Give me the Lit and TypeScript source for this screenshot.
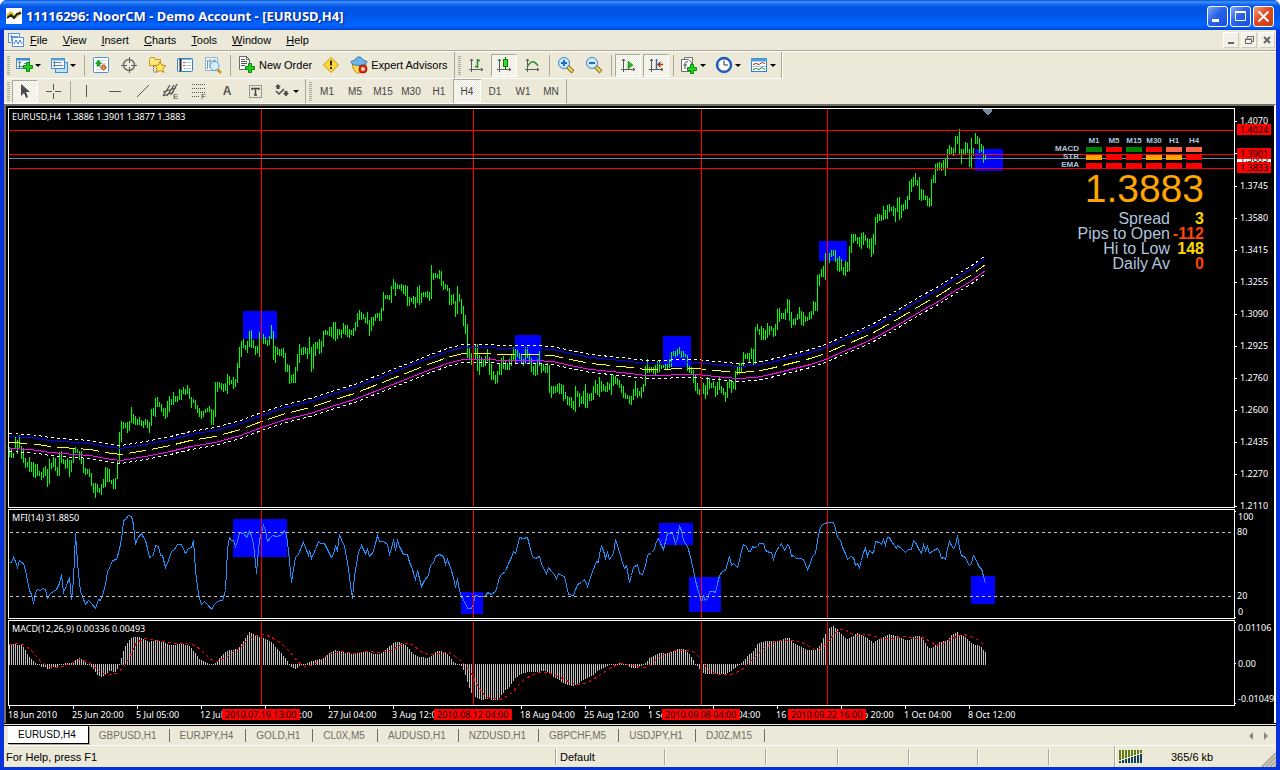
import { LitElement, html, svg, css } from "lit";
import { customElement, property, state } from "lit/decorators.js";
import { classMap } from "lit/directives/class-map.js";

/* ---------- market data (plot pixels, one bar every two pixels) ---------- */

const BAR_STEP = 2;
const FIRST_X = 9;

const PRICE = `447-457 448-458 453-458 436-448 440-454 435-448 446-459 448-463 458-468 462-467 457-472 462-472 462-477 464-478
464-476 471-476 472-480 468-478 466-476 469-487 459-484 463-469 457-467 458-471 467-476 452-476 451-463 459-464 460-469 458-468
460-477 460-472 448-463 447-453 449-453 451-460 451-464 459-473 468-475 469-474 469-477 473-486 483-493 483-498 484-492 488-493
484-495 479-488 467-487 468-482 469-482 480-484 479-489 478-489 460-479 432-464 421-442 422-429 423-428 422-433 421-431 407-423
414-424 416-425 419-425 417-425 420-426 421-428 419-425 420-428 422-433 409-426 408-416 398-417 397-407 402-407 404-412 408-416
408-419 401-417 396-412 399-405 392-405 396-402 396-402 389-400 390-400 387-394 389-395 385-394 388-399 397-408 399-403 400-409
405-413 408-417 411-419 411-417 409-413 408-412 406-412 409-425 410-425 382-417 382-392 382-388 383-390 384-392 383-391 374-394
376-385 380-384 377-389 379-387 363-383 347-368 341-357 339-348 345-350 341-353 331-347 330-348 340-348 346-355 346-353 332-357
334-342 334-344 337-344 340-346 336-345 325-339 331-360 346-363 347-355 349-356 349-356 348-358 353-372 364-372 365-384 375-383
374-383 367-383 354-371 344-363 348-355 347-355 347-354 348-359 337-354 347-372 344-369 342-356 342-349 339-354 341-353 331-347
330-335 331-335 327-336 327-337 322-339 322-341 329-339 329-335 330-338 323-334 325-335 325-337 329-338 330-335 328-336 322-331
313-327 310-320 312-320 314-319 317-323 312-324 320-336 317-331 317-326 314-321 313-318 313-321 308-321 292-311 295-299 295-299
295-300 286-303 279-289 282-296 284-289 285-289 284-291 285-294 285-296 286-306 297-306 298-302 296-304 297-308 287-303 285-305
293-303 292-297 292-297 291-298 292-301 265-299 273-280 273-278 274-278 270-279 271-286 281-290 284-289 285-291 288-305 295-305
294-304 301-317 286-314 294-302 299-314 306-326 315-334 324-358 348-359 353-365 345-360 344-360 344-371 355-375 357-367 360-367
356-366 349-361 357-375 364-380 371-380 375-384 371-383 363-375 358-375 356-369 361-370 363-370 359-370 354-366 347-360 349-364
350-357 353-359 355-364 359-366 347-364 347-358 353-364 358-372 366-375 364-376 359-375 351-366 363-373 364-371 366-373 363-373
365-393 386-398 386-394 386-393 384-392 383-394 384-394 385-401 392-399 396-405 397-406 397-408 401-410 386-412 391-397 393-407
396-404 391-404 384-408 393-408 394-401 393-401 386-400 380-393 384-395 377-397 381-392 384-391 386-392 382-392 383-390 374-395
375-386 376-384 378-385 380-388 384-393 386-398 393-399 395-399 396-404 396-405 389-400 381-396 388-398 391-396 387-398 384-392
366-386 359-373 367-373 367-372 367-374 365-375 361-373 361-372 365-369 365-368 363-369 363-369 359-368 352-367 351-356 351-357
349-356 347-354 351-358 351-357 354-357 355-371 366-373 367-375 370-383 375-391 383-394 389-395 383-394 383-394 385-399 377-395
378-389 383-388 381-388 386-397 382-395 376-390 386-393 388-395 392-402 382-398 379-388 381-393 382-389 371-390 367-375 363-374
363-372 352-366 354-359 353-359 353-362 348-359 349-366 327-364 324-331 329-335 326-340 328-340 330-340 323-338 326-335 326-331
328-337 324-336 309-330 308-322 313-319 313-319 309-320 299-313 300-321 312-328 319-325 318-325 314-320 307-319 311-325 312-326
316-322 317-321 312-320 311-319 301-315 302-311 275-311 274-286 269-277 266-277 253-280 250-265 253-263 250-257 250-256 250-262
258-271 256-272 259-271 267-275 261-276 262-272 246-271 234-253 234-243 234-241 237-244 237-247 233-249 232-245 235-241 238-248
239-249 238-257 234-254 217-245 214-223 214-221 215-221 206-220 210-219 205-219 204-212 207-211 206-216 208-222 198-212 197-220
205-218 204-211 200-209 196-209 181-200 179-192 177-187 173-185 180-186 177-200 189-201 190-200 195-200 196-206 198-207 179-206
175-183 164-183 163-171 162-170 163-171 160-170 159-176 149-168 145-155 147-155 148-156 136-153 136-144 129-154 149-164 149-154
142-154 143-153 149-167 138-168 148-156 133-144 136-144 138-153 144-152 146-163 155-160`
  .split(/\s+/)
  .map((s) => s.split("-").map(Number));

type Pt = [number, number];
const pts = (s: string): Pt[] => s.trim().split(/\s+/).map((p) => p.split(",").map(Number) as Pt);

const AVERAGE = pts(`9,442 30,443 50,446 75,448 90,449 105,452 120,454 145,450 170,445 190,440 215,436 240,429 261,421 285,413
310,407 331,400 354,393 382,382 405,373 430,363 450,356 463,353 490,353 500,354 535,354 552,355 570,359 590,363 610,365 630,367
645,369 661,369 680,368 697,368 715,370 737,372 755,371 770,368 790,363 810,358 825,353 843,345 860,338 875,331 893,321 910,311
925,302 938,295 955,284 970,275 985,264`);

const MFI = pts(`9,562 11,562 13,557 15,561 17,567 19,560 21,562 23,563 25,570 27,580 29,590 31,594 33,603 35,592 37,589 40,590
42,588 45,589 47,598 50,593 53,591 56,589 59,583 61,574 63,592 66,585 69,577 71,599 73,580 75,533 77,562 79,582 80,591 82,596
85,604 88,600 91,603 95,608 98,599 100,600 103,592 105,583 107,572 110,565 112,560 116,559 119,549 122,532 123,520 125,519
128,515 131,516 133,524 135,544 137,538 141,533 143,537 145,540 147,548 149,557 151,556 153,554 155,545 158,546 160,555 162,555
165,567 168,560 171,551 174,549 177,544 181,544 185,553 188,548 191,547 193,540 195,570 197,587 199,598 201,604 204,601 207,604
211,609 214,604 217,601 220,600 222,600 225,590 226,570 227,550 228,542 229,537 231,540 233,540 235,546 237,541 239,532 243,533
246,537 249,531 251,535 253,544 255,562 256,573 257,560 259,540 261,532 263,525 265,530 267,541 270,537 272,535 276,536 280,535
282,533 284,530 286,535 288,550 291,582 293,568 295,557 298,554 301,546 303,542 305,547 308,555 309,550 311,558 315,549 318,541
320,543 324,543 328,551 331,557 333,554 335,546 337,550 339,534 341,539 344,546 346,557 348,568 350,585 352,598 354,575 356,564
358,552 361,545 363,549 365,553 367,549 369,556 373,551 375,543 377,535 379,541 383,541 387,544 389,554 391,548 393,539 395,550
397,540 399,546 403,554 407,554 409,562 411,566 415,579 417,570 419,578 421,586 424,580 428,575 430,565 433,562 435,556 439,554
443,556 445,564 447,559 450,567 453,577 455,587 457,578 459,590 461,596 465,603 467,608 471,608 473,603 475,595 480,596 485,596
487,592 491,594 495,591 497,585 499,577 501,574 505,571 508,563 511,557 513,551 515,553 517,546 519,537 523,538 527,537 529,545
532,556 535,558 539,556 541,563 543,568 546,573 548,567 551,571 553,573 556,578 558,573 561,575 564,576 566,585 568,594 573,595
577,584 581,582 584,579 587,586 590,577 592,571 596,561 598,562 599,553 601,546 603,550 605,558 607,552 609,559 613,553 615,539
617,545 620,555 622,562 624,568 626,565 629,582 631,575 633,567 637,564 639,573 642,574 645,565 647,555 651,552 654,549 656,541
658,538 660,543 663,549 666,537 667,533 672,533 675,543 677,538 679,526 681,530 683,540 687,546 690,556 693,570 695,580 697,588
699,594 701,602 703,596 705,600 708,597 709,591 713,591 715,592 717,583 719,575 722,571 725,570 727,563 729,556 731,565 733,563
737,567 739,560 741,550 743,544 746,546 748,551 750,551 752,546 754,547 757,546 759,543 763,543 765,550 769,552 771,552 773,559
776,550 779,546 781,543 784,550 786,547 787,544 789,546 791,556 793,555 796,558 800,558 803,559 805,564 807,569 809,565 812,556
815,553 817,540 819,530 821,525 824,523 828,522 833,522 835,528 837,537 840,540 842,547 845,553 847,559 850,556 853,557 855,565
857,563 859,567 861,560 863,552 865,548 867,556 869,550 872,553 874,549 875,541 879,542 881,544 883,539 885,545 887,537 889,537
891,541 894,545 896,548 897,545 901,548 905,552 908,549 911,549 913,540 915,542 917,546 919,550 921,553 923,544 925,550 927,546
929,553 933,550 937,548 939,551 941,558 943,557 945,559 947,548 949,541 951,545 953,548 955,545 957,535 959,548 961,555 965,557
967,562 969,565 971,563 973,555 975,558 977,563 979,567 981,568 983,576 985,583`);

const MACD = pts(`9,644 22,645 26,652 29,657 33,661 37,664 39,665 41,667 45,667 48,670 52,667 57,667 59,664 63,664 65,663 71,663
74,661 79,658 83,660 87,664 89,665 93,669 96,674 101,677 105,674 109,671 115,672 118,668 120,662 122,653 124,648 127,643 130,639
133,637 139,637 143,639 149,642 156,640 162,642 170,645 180,644 188,645 191,648 195,653 199,659 204,662 209,664 213,664 215,663
219,658 224,653 229,650 237,649 240,646 243,641 247,635 249,632 252,633 256,636 262,637 266,639 270,641 273,644 277,649 281,653
285,658 289,664 291,667 294,669 297,668 300,665 303,664 306,664 311,661 317,660 323,658 329,653 334,650 339,651 346,653 354,654
360,652 366,651 374,654 380,654 384,651 388,647 394,642 399,642 404,644 408,648 412,653 416,656 422,657 428,658 432,655 436,651
441,651 446,653 450,657 454,663 459,665 462,667 465,675 469,688 472,695 476,697 481,700 487,699 492,700 497,700 501,695 505,690
509,687 515,678 519,675 524,673 528,672 536,672 545,671 549,673 553,677 560,681 568,685 573,686 580,682 585,679 590,677 596,672
602,668 609,665 611,664 615,664 619,663 623,664 627,665 630,668 637,668 642,666 646,662 649,658 655,655 659,653 668,653 672,651
678,649 684,649 689,654 692,658 695,664 697,666 699,669 702,672 705,674 711,674 724,674 731,671 737,666 740,664 744,660 748,655
753,651 757,644 760,642 767,641 780,641 785,638 789,638 793,643 800,647 807,650 815,650 820,645 825,634 829,628 833,626 837,629
841,634 846,639 851,637 857,633 863,636 868,639 873,643 878,639 884,636 889,634 893,635 899,637 904,640 909,640 915,636 919,636
923,640 927,646 930,649 933,647 939,642 947,640 951,635 957,632 959,635 964,636 970,642 976,645 981,647 985,652`);

const SIGNAL = pts(`9,644 18,643 25,645 33,652 40,661 47,665 54,667 62,666 70,663 80,659 87,661 94,666 100,672 106,674 112,674
118,672 124,665 130,655 136,642 144,638 155,640 163,641 175,643 185,643 195,645 203,652 210,659 216,661 224,658 232,652 240,647
248,638 255,635 265,634 273,638 282,644 290,652 297,661 304,666 312,665 320,660 328,654 335,652 343,651 355,653 365,651 380,652
392,650 398,645 406,643 412,644 420,651 428,654 435,654 441,652 448,652 455,656 461,661 466,666 471,673 477,685 484,695 490,698
500,699 506,696 512,692 517,686 523,680 530,675 537,672 545,672 553,674 560,677 568,681 575,684 585,683 593,679 600,674 608,669
615,665 620,663 628,664 636,666 645,667 653,662 659,656 668,652 676,650 685,650 693,651 698,656 703,663 709,670 716,674 730,674
738,671 744,667 750,661 758,653 764,647 772,642 778,640 787,640 795,640 802,642 808,646 815,649 822,648 828,641 833,634 839,629
845,629 852,634 858,635 868,634 875,636 881,638 890,638 898,637 905,636 915,638 922,637 930,641 935,645 943,643 950,639 956,636
962,634 968,635 975,638 981,642 985,645`);

const VERTICALS = [261, 473, 701, 827];
const PRICE_BOXES = [[243, 311, 34, 28], [515, 335, 26, 28], [663, 336, 28, 31], [819, 241, 28, 20], [975, 149, 28, 22]];
const MFI_BOXES = [[233, 519, 54, 38], [461, 592, 22, 22], [659, 523, 34, 22], [689, 577, 32, 35], [971, 576, 24, 28]];

const at = (line: Pt[], x: number): number => {
  for (let i = 1; i < line.length; i++) {
    const [x0, y0] = line[i - 1];
    const [x1, y1] = line[i];
    if (x <= x1) return Math.round(y0 + ((y1 - y0) * (x - x0)) / (x1 - x0));
  }
  return line[line.length - 1][1];
};
const shape = (line: Pt[], dy = 0) => line.map(([x, y]) => `${x + 0.5},${y + dy + 0.5}`).join(" ");
const boxes = (list: number[][]) =>
  list.map(([x, y, w, h]) => svg`<rect x=${x} y=${y} width=${w} height=${h} fill="#0000ff"></rect>`);
const verticals = () =>
  VERTICALS.map(
    (x) => svg`<line x1=${x - FIRST_X + 0.5} x2=${x - FIRST_X + 0.5} y1="0" y2="100%" stroke="#ff0000"></line>`,
  );

/* ---------- icons ---------- */

const plus = (x: number, y: number) =>
  svg`<path transform="translate(${x} ${y})" d="M3.5.5h3v3h3v3h-3v3h-3v-3h-3v-3h3z" fill="#1fd21f" stroke="#0a8a0a"></path>`;
const axes = svg`<path d="M4.500 3v13M2 13.500h14M3 5l1.500-2L6 5M14 12l2 1.500-2 1.500" fill="none" stroke="#5a5a5a"></path>`;
const lens = (sign: unknown) => svg`
  <path d="M10.500 10.500l5.500 5.500" stroke="#8a6a10" stroke-width="4"></path>
  <path d="M11 11l4.500 4.500" stroke="#ffdf60" stroke-width="2"></path>
  <circle cx="7" cy="7" r="5.500" fill="#cfe8fb" stroke="#3a88c8"></circle>${sign}`;

const ICONS: Record<string, unknown> = {
  newChart: svg`<rect x="1.500" y="2.500" width="13" height="10" fill="#f2faff" stroke="#3d8fc6"></rect>
    <path d="M1.500 3.500h13" stroke="#3d8fc6" stroke-width="2"></path>
    <path d="M4.500 5v7M3 10.500h9M3 6.500h3M9 7.500h4" stroke="#6a7f90" fill="none"></path>${plus(8, 6)}`,
  profiles: svg`<rect x="5.500" y="6.500" width="12" height="10" fill="#bfe0f5" stroke="#3d8fc6"></rect>
    <rect x="1.500" y="2.500" width="13" height="10" fill="#f2faff" stroke="#3d8fc6"></rect>
    <path d="M1.500 3.500h13" stroke="#5aa5d6" stroke-width="2"></path><path d="M4.500 5v6M3 9.500h10M3 6.500h8" stroke="#6a7f90"></path>`,
  market: svg`<rect x="1.500" y="1.500" width="15" height="15" rx="1" fill="#fff" stroke="#4a93d0"></rect>
    <path d="M4 4.500h10M4 7.500h10M4 10.500h10M4 13.500h10" stroke="#c8dcec"></path>
    <path d="M6.500 4l3 3.500H8V10H5V7.500H3.500z" fill="#18b018" stroke="#087008" stroke-width=".5"></path>
    <path d="M11.500 14.500l3-3H13V9h-3v2.500H8.500z" fill="#f08a5a" stroke="#a83010" stroke-width=".7"></path>`,
  target: svg`<circle cx="9" cy="9" r="5.500" fill="none" stroke="#6f6f6f" stroke-width="1.500"></circle>
    <path d="M9.500 1v6M9.500 11v6M1 9.500h6M11 9.500h6" stroke="#5f5f5f"></path>`,
  favorites: svg`<path d="M1.500 3.500l1-2h4l1 2h5v6h-11z" fill="#ffe680" stroke="#c79a1a"></path>
    <path d="M5.500 10v6h3" stroke="#4a4a4a" stroke-dasharray="1 1" fill="none"></path>
    <path d="M12 5.500l1.800 3.600 4 .5-2.900 2.800.8 4-3.700-2-3.600 2 .7-4-2.900-2.800 4-.5z" fill="#ffe860" stroke="#c08a10"></path>`,
  dataWindow: svg`<rect x="1.500" y="2.500" width="15" height="13" rx="1" fill="#fff" stroke="#2f83c6"></rect>
    <path d="M2 3.500h14" stroke="#7fbce6"></path>
    <path d="M4.500 3v12" stroke="#222" stroke-width="2"></path><path d="M8 6.500h7M8 9.500h7M8 12.500h7" stroke="#b7c9d9"></path>
    <path d="M7 6.500h2M7 9.500h2" stroke="#e04040"></path>`,
  tester: svg`<rect x="1.500" y="1.500" width="12" height="13" fill="#f5faff" stroke="#86b4da"></rect>
    <path d="M3.500 4v9M6 3v9M3 5h9M10.500 3v4" stroke="#7b93a8"></path><path d="M13 13l4 4" stroke="#c89a20" stroke-width="3"></path>
    <circle cx="10.500" cy="10" r="4.500" fill="#d6ecfb" stroke="#5c9fd2"></circle>`,
  order: svg`<path d="M1.500.5h7l3 3v10h-10z" fill="#fff" stroke="#6a6a6a"></path><path d="M8.500.5v3h3" fill="none" stroke="#6a6a6a"></path>
    <path d="M3 3.500h4M3 5.500h6M3 7.500h6M3 9.500h4" stroke="#555"></path>${plus(7, 7)}`,
  editor: svg`<path d="M9 1.500L16.500 9 9 16.500 1.500 9z" fill="#ffd93a" stroke="#c79410"></path>
    <path d="M8 4.500h2v5H8zM8 11h2v2H8z" fill="#3a2a00"></path>`,
  experts: svg`<path d="M2.500 8c0 6 3 9 6.500 9s7-3 7-9z" fill="#ffd84a" stroke="#c08a10"></path>
    <path d="M1 6c0-1.500 3-1 4-2s1-3 4-3 3 2 4 3 4 .5 4 2-4 3.500-8 3.500S1 8 1 6z" fill="#6fb4e8" stroke="#2f78b4"></path>
    <circle cx="13" cy="13" r="4" fill="#e03010" stroke="#a01800"></circle><rect x="11.500" y="11.500" width="3" height="3" fill="#fff"></rect>`,
  bars: svg`${axes}<path d="M10.500 3v9M10.500 4.500H13M8 10.500h2.500" stroke="#1f8a2c" fill="none" stroke-width="1.500"></path>`,
  candles: svg`${axes}<path d="M10.500 1v12" stroke="#0a6a0a"></path><rect x="8.500" y="3.500" width="4" height="7" fill="#2fe02f" stroke="#0a7a0a"></rect>`,
  line: svg`${axes}<path d="M4 11c3-5 5-6 7-5s3 2 4 4" stroke="#2f8f3a" fill="none" stroke-width="1.500"></path>`,
  zoomIn: lens(svg`<path d="M4 7h6M7 4v6" stroke="#1f6fb4" stroke-width="2"></path>`),
  zoomOut: lens(svg`<path d="M4 7h6" stroke="#1f6fb4" stroke-width="2"></path>`),
  autoScroll: svg`${axes}<path d="M9 5l5 4-5 4z" fill="#1fb81f" stroke="#0a7a0a" stroke-width=".5"></path>`,
  shift: svg`${axes}<path d="M9.500 3v10" stroke="#1f70b8" stroke-width="1.500"></path>
    <path d="M16 8.500h-4M13.500 6L11 8.500l2.500 2.500" stroke="#b03a10" stroke-width="1.500" fill="none"></path>`,
  indicators: svg`<path d="M4.500 1.500h8v12h-8z" fill="#f6f6f6" stroke="#777"></path><path d="M1.500 3.500h7l3 3v9h-10z" fill="#fff" stroke="#6a6a6a"></path>
    <path d="M8 6c-3-1-3 1-3 3v4M3.500 9H7" stroke="#444" fill="none"></path>${plus(7, 8)}`,
  periods: svg`<circle cx="9" cy="9" r="7" fill="#fff" stroke="#1f5fc0" stroke-width="2.500"></circle>
    <path d="M9 4.500V9h4" stroke="#333" fill="none"></path><path d="M9 3v1M9 14v1M3.500 9h1" stroke="#666"></path>`,
  templates: svg`<rect x="1.500" y="2.500" width="15" height="13" fill="#fff" stroke="#2f83c6"></rect>
    <path d="M1 4h16" stroke="#4aa0dc" stroke-width="3"></path><path d="M3 8.500l3-1 3 1 3-2 3 1" stroke="#a03010" fill="none"></path>
    <path d="M2 10.500h14" stroke="#9ac4e0"></path><path d="M3 13.500l3-1 3 1 3-2 3 2" stroke="#1f8a2c" fill="none"></path>`,
  cursor: svg`<path d="M5 2v12l3-3 2 5 2-1-2-5h4z" fill="#4a4a4a"></path>`,
  cross: svg`<path d="M9.500 2v6M9.500 11v6M2 9.500h6M11 9.500h6" stroke="#555"></path>`,
  vline: svg`<path d="M8.500 3v12" stroke="#555"></path>`,
  hline: svg`<path d="M3 9.500h12" stroke="#555"></path>`,
  trend: svg`<path d="M3 15L15 3" stroke="#555"></path>`,
  channel: svg`<path d="M1 10l13-4M1 14l11-4M1 14L8 3M5 14l7-11M9 13l6-11" stroke="#555" stroke-width="1.300" fill="none"></path>
    <text x="11" y="17" font-size="8" font-family="Liberation Sans, sans-serif" fill="#444">E</text>`,
  fibo: svg`<path d="M2 2.500h14M2 6.500h14M2 10.500h14M2 14.500h8" stroke="#555" stroke-dasharray="1 1"></path>
    <text x="11" y="17" font-size="8" font-family="Liberation Sans, sans-serif" fill="#444">F</text>`,
  label: svg`<rect x="3.500" y="3.500" width="12" height="12" fill="none" stroke="#444" stroke-dasharray="1 1"></rect>
    <path d="M6 8V6.500h7V8M9.500 6.500V13M8 13h3" stroke="#444" stroke-width="1.500" fill="none"></path>`,
  arrows: svg`<path d="M5 2l3 3H6.500v2h-3V5H2zM10 11h1.500V9h3v2H16l-3 3.500z" fill="#4a4a4a"></path>
    <path d="M3 9l3 3 5-5" stroke="#4a4a4a" stroke-width="1.500" fill="none"></path>`,
};

@customElement("tool-icon")
class ToolIcon extends LitElement {
  static styles = css`
    :host { display: block; width: 18px; height: 18px; }
    svg { display: block; width: 18px; height: 18px; overflow: visible; }
  `;
  @property() name = "";
  render() {
    return html`<svg viewBox="0 0 18 18" aria-hidden="true">${ICONS[this.name]}</svg>`;
  }
}

/* ---------- chart ---------- */

const SCALE = [[120, "1.4070"], [185, "1.3745"], [217, "1.3580"], [249, "1.3415"], [281, "1.3255"], [313, "1.3090"],
  [345, "1.2925"], [377, "1.2760"], [409, "1.2600"], [441, "1.2435"], [473, "1.2270"], [505, "1.2110"]] as [number, string][];
const PRICE_TAGS = [[153, "1.3883", "#fff"], [124, "1.4024", "#f00"], [148, "1.3901", "#f00"], [162, "1.3833", "#f00"]] as [number, string, string][];
const DATES = [[8, "18 Jun 2010"], [72, "25 Jun 20:00"], [136, "5 Jul 05:00"], [200, "12 Jul 13:00"], [264, "19 Jul 20:00"],
  [328, "27 Jul 04:00"], [392, "3 Aug 12:00"], [520, "18 Aug 04:00"], [584, "25 Aug 12:00"],
  [648, "1 Sep 20:00"], [712, "9 Sep 04:00"], [776, "16 Sep 12:00"], [840, "23 Sep 20:00"], [904, "1 Oct 04:00"],
  [968, "8 Oct 12:00"]] as [number, string][];
const DATE_TAGS = [[222, "2010.07.19 13:00"], [434, "2010.08.12 04:00"], [662, "2010.09.08 04:00"], [788, "2010.09.22 16:00"]] as [number, string][];
const FRAMES = ["M1", "M5", "M15", "M30", "H1", "H4"];
const SIGNALS: [string, string[]][] = [
  ["MACD", ["green", "red", "green", "red", "tomato", "tomato"]],
  ["STR", ["orange", "red", "red", "orange", "orange", "red"]],
  ["EMA", ["red", "red", "red", "red", "red", "red"]],
];

@customElement("price-chart")
class PriceChart extends LitElement {
  static styles = css`
    :host { display: flex; flex-direction: column; background: #000; color: #fff; padding: 2px 0 0 2px;
      font: 9px "Noto Sans", sans-serif; }
    .pane { display: grid; grid-template-columns: minmax(0, 1fr) 39px; grid-template-rows: minmax(0, 1fr); margin-bottom: 1px; }
    .price { height: 400px; }
    .mfi { height: 110px; }
    .macd { height: 86px; margin-bottom: 0; }
    .plot { position: relative; border: 1px solid #fff; overflow: hidden; }
    .plot svg, .scale, .dates { display: block; width: 100%; height: 100%; }
    .scale { overflow: visible; }
    .dates { height: 17px; }
    svg { shape-rendering: crispEdges; fill: none; }
    text { fill: #fff; font: 9px "Noto Sans", sans-serif; }
    .dark { fill: #000; }
    .title { position: absolute; left: 3px; top: 2px; line-height: 12px; white-space: pre; }
    .board { position: absolute; right: 30px; top: 24px; display: flex; flex-direction: column; align-items: flex-end; color: #b0c4de;
      font-family: "Liberation Sans", Arial, sans-serif; }
    .matrix { border-spacing: 0; border-collapse: collapse; font-weight: bold; font-size: 8px; }
    .matrix th { padding: 0; height: 8px; line-height: 8px; font-weight: bold; }
    .matrix thead th { height: 12px; width: 20px; text-align: center; vertical-align: bottom; }
    .matrix tbody th { text-align: right; padding-right: 5px; }
    .matrix td { padding: 0; width: 20px; height: 8px; }
    .cell { width: 16px; height: 5px; margin: 0 auto; }
    .green { background: #008000; }
    .red { background: #ff0000; }
    .tomato { background: #ff6347; }
    .orange { background: #ffa500; }
    .quote { font-size: 39px; line-height: 40px; color: #ffa500; }
    .facts { display: grid; grid-template-columns: auto 34px; text-align: right; margin: 2px 0 0; font-size: 16px; line-height: 15px; }
    .facts dt, .facts dd { margin: 0; }
    .facts dd { font-weight: bold; color: #ffd700; }
    .facts .down { color: #ff4500; }
  `;

  private pricePlot() {
    const h = (y: number, c: string) => svg`<line x1="0" x2="100%" y1=${y - 108.5} y2=${y - 108.5} stroke=${c}></line>`;
    return html`<svg role="img" aria-label="EURUSD H4 price">
      <g transform="translate(-9 -109)">
        ${boxes(PRICE_BOXES)}
        <path stroke="#00ff00" d=${PRICE.map(([a, b], i) => `M${FIRST_X + i * BAR_STEP + 0.5} ${a}V${b}`).join("")}></path>
        <polyline points=${shape(AVERAGE, -9)} stroke="#fff" stroke-dasharray="3 3"></polyline>
        <polyline points=${shape(AVERAGE, -6)} stroke="#0000ff"></polyline>
        <polyline points=${shape(AVERAGE)} stroke="#ffff00" stroke-dasharray="18 6"></polyline>
        <polyline points=${shape(AVERAGE, 6)} stroke="#ff00ff"></polyline>
        <polyline points=${shape(AVERAGE, 9)} stroke="#fff" stroke-dasharray="3 3"></polyline>
        <path d="M983 109h9v2l-4 4h-1l-4-4z" fill="#778899"></path>
      </g>
      ${verticals()} ${h(158, "#778899")} ${h(130, "#f00")} ${h(154, "#f00")} ${h(168, "#f00")}
    </svg>`;
  }

  private board() {
    return html`<div class="board">
      <table class="matrix">
        <thead><tr><td></td>${FRAMES.map((f) => html`<th scope="col">${f}</th>`)}</tr></thead>
        <tbody>${SIGNALS.map(([name, row]) => html`<tr><th scope="row">${name}</th>
          ${row.map((c) => html`<td><div class=${classMap({ cell: true, [c]: true })}></div></td>`)}</tr>`)}</tbody>
      </table>
      <div class="quote">1.3883</div>
      <dl class="facts">
        <dt>Spread</dt><dd>3</dd>
        <dt>Pips to Open</dt><dd class="down">-112</dd>
        <dt>Hi to Low</dt><dd>148</dd>
        <dt>Daily Av</dt><dd class="down">0</dd>
      </dl>
    </div>`;
  }

  render() {
    const macdBars = PRICE.map((_, i) => {
      const x = FIRST_X + i * BAR_STEP;
      const y = at(MACD, x);
      return y <= 664 ? `M${x + 0.5} ${y}V665` : `M${x + 0.5} 664V${y}`;
    }).join("");
    return html`
      <div class="pane price">
        <div class="plot">${this.pricePlot()}<div class="title">EURUSD,H4  1.3886 1.3901 1.3877 1.3883</div>${this.board()}</div>
        <svg class="scale"><g transform="translate(0 -108)">
          ${SCALE.map(([y, t]) => svg`<path d="M0 ${y + 1.5}h2" stroke="#fff"></path><text x="5" y=${y + 4}>${t}</text>`)}
          <path d="M0 153.500h2" stroke="#fff"></path>
          ${PRICE_TAGS.map(([y, t, c]) => svg`<rect x="2" y=${y} width="34" height="11" fill=${c}></rect><text class="dark" x="5" y=${y + 9}>${t}</text>`)}
        </g></svg>
      </div>
      <div class="pane mfi">
        <div class="plot">
          <svg role="img" aria-label="Money Flow Index">
            <g transform="translate(-9 -510)">${boxes(MFI_BOXES)}<polyline points=${shape(MFI)} stroke="#1e90ff"></polyline></g>
            <line x1="1" x2="100%" y1="22.500" y2="22.500" stroke="#c0c0c0" stroke-dasharray="3 3"></line>
            <line x1="1" x2="100%" y1="86.500" y2="86.500" stroke="#c0c0c0" stroke-dasharray="3 3"></line>
            ${verticals()}
          </svg>
          <div class="title">MFI(14) 31.8850</div>
        </div>
        <svg class="scale">
          <path d="M0 2.500h1M0 108.500h1" stroke="#fff"></path>
          <text x="3" y="11">100</text><text x="2" y="26">80</text><text x="2" y="90">20</text><text x="3" y="106">0</text>
        </svg>
      </div>
      <div class="pane macd">
        <div class="plot">
          <svg role="img" aria-label="MACD">
            <g transform="translate(-9 -621)">
              <path d=${macdBars} stroke="#c0c0c0"></path>
              <polyline points=${shape(SIGNAL)} stroke="#ff0000" stroke-dasharray="3 3"></polyline>
            </g>
            ${verticals()}
          </svg>
          <div class="title">MACD(12,26,9) 0.00336 0.00493</div>
        </div>
        <svg class="scale">
          <path d="M0 2.500h1M0 43.500h1M0 83.500h1" stroke="#fff"></path>
          <text x="3" y="11">0.01106</text><text x="3" y="47">0.00</text><text x="3" y="82">-0.01049</text>
        </svg>
      </div>
      <svg class="dates"><g transform="translate(-8 -706)">
        ${DATES.map(([x, t]) => svg`<path d="M${x + 1.5} 706v3" stroke="#fff"></path><text x=${x} y="718">${t}</text>`)}
        ${DATE_TAGS.map(([x, t]) => svg`<rect x=${x} y="709" width="78" height="11" fill="#f00"></rect><text class="dark" x=${x + 3} y="718">${t}</text>`)}
      </g></svg>
    `;
  }
}

/* ---------- window ---------- */

const MENU = ["File", "View", "Insert", "Charts", "Tools", "Window", "Help"];
const TABS = ["EURUSD,H4", "GBPUSD,H1", "EURJPY,H4", "GOLD,H1", "CL0X,M5", "AUDUSD,H1", "NZDUSD,H1", "GBPCHF,M5", "USDJPY,H1", "DJ0Z,M15"];
const PERIODS = ["M1", "M5", "M15", "M30", "H1", "H4", "D1", "W1", "MN"];

@customElement("app-root")
class AppRoot extends LitElement {
  static styles = css`
    :host { display: block; font: 11px "Liberation Sans", Arial, sans-serif; color: #000; }
    * { box-sizing: border-box; }
    button { font: inherit; color: inherit; background: none; border: 0; margin: 0; padding: 0; }
    .window { min-height: 100vh; display: flex; flex-direction: column; background: #0831d9; border-radius: 7px 7px 0 0; }
    .titlebar { height: 30px; display: flex; align-items: center; padding: 2px 6px 0; border-radius: 7px 7px 0 0;
      background: linear-gradient(#0a4fd6 0, #3d95ff 2px, #1a6cf0 4px, #0055e5 7px, #0054e3 13px, #005cf5 20px, #0066ff 25px, #0058ee 28px, #003dd7 30px); }
    .logo { display: block; width: 16px; height: 16px; margin-right: 4px; }
    .caption { flex: 1; margin: 0; font: bold 13px "Noto Sans", sans-serif; line-height: 20px; color: #fff; text-shadow: 1px 1px 1px #0a1883; white-space: nowrap; }
    .controls { display: flex; gap: 2px; }
    .control { width: 21px; height: 21px; border: 1px solid #fff; border-radius: 3px; background: linear-gradient(135deg, #7fa8f8, #2a62e8 45%, #1a50d8); }
    .control.close { background: linear-gradient(135deg, #f0a080, #e04a20 45%, #c83a10); }
    .control svg, .mini svg { display: block; width: 100%; height: 100%; }
    .body { flex: 1; margin: 0 4px 4px; background: #ece9d8; display: flex; flex-direction: column; }
    .menubar { height: 22px; display: flex; align-items: center; padding: 0 1px 2px 4px; border-bottom: 1px solid #fff; box-shadow: inset 0 -1px #aca899; }
    .menubar svg.doc { width: 16px; height: 16px; margin-right: -1px; }
    .menu { padding: 0 7px; margin-right: 1px; line-height: 18px; }
    .menu::first-letter { text-decoration: underline; }
    .spacer { flex: 1; }
    .mini { width: 16px; height: 16px; margin-left: 2px; background: #f4f2e8; border: 1px solid #fff; border-right-color: #d0ccb8; border-bottom-color: #d0ccb8; }
    .bar { display: flex; height: 27px; }
    .bar.second { height: 25px; }
    .strip { display: flex; align-items: center; border-right: 1px solid #aca899; border-bottom: 1px solid #fff; padding-right: 1px; }
    .strip.end { box-shadow: 1px 0 #fff; padding-right: 0; }
    .grip { width: 3px; height: 19px; margin: 0 1px 0 3px; background: repeating-linear-gradient(#aca899 0 1px, #ece9d8 1px 2px); }
    .tool { width: 28px; height: 24px; display: flex; align-items: center; justify-content: center; }
    .tool span { width: 26px; height: 23px; display: flex; align-items: center; justify-content: center; }
    .tool.pressed span { border: 1px solid #aca899; border-right-color: #fff; border-bottom-color: #fff;
      background: repeating-conic-gradient(#fff 0 25%, #ece9d8 0 50%) 0 0 / 2px 2px; }
    .drop { width: 35px; height: 24px; display: flex; align-items: center; padding-left: 4px; gap: 2px; }
    .drop::after { content: ""; border: 3px solid transparent; border-top-color: #000; border-bottom: 0; }
    .labelled { height: 24px; display: flex; align-items: center; gap: 3px; padding: 0 5px; white-space: nowrap; }
    .sep { width: 1px; height: 21px; margin: 0 2px 0 3px; background: #aca899; }
    .period { width: 28px; height: 24px; font-size: 10px; color: #444; display: flex; align-items: center; justify-content: center; }
    .period.pressed { box-shadow: inset 1px 1px #aca899, inset -1px -1px #fff; background: repeating-conic-gradient(#fff 0 25%, #ece9d8 0 50%) 0 0 / 2px 2px; }
    .letter { font-weight: bold; font-size: 12px; color: #555; }
    .mdi { flex: 1; display: flex; flex-direction: column; border: solid #716f64; border-width: 2px 2px 0; border-color: #716f64 #fff #fff #716f64; }
    price-chart { flex: 1; }
    .tabs { height: 23px; display: flex; align-items: flex-start; border-top: 3px double #000; border-bottom: 1px solid #fff; padding-left: 4px; }
    .tab { height: 13px; line-height: 12px; padding: 0 12px 0 10px; margin-top: 3px; font-size: 10px; color: #716f64; border-right: 1px solid #716f64; white-space: nowrap; }
    .tab.active { height: 18px; line-height: 16px; margin-top: 0; background: #fff; color: #000; padding: 0 12px 0 10px; border: solid #000; border-width: 0 1px 1px 0; box-shadow: 1px 1px #aca899; }
    .arrows { display: flex; gap: 11px; padding: 6px 8px 0 0; }
    .arrows button { border: 4px solid transparent; border-right-color: #8a887c; border-left: 0; }
    .arrows button + button { border-left: 4px solid #8a887c; border-right: 0; }
    .status { height: 21px; display: flex; align-items: center; line-height: 16px; padding-left: 2px; white-space: nowrap; }
    .status .main { flex: 1; }
    .field { height: 16px; padding-left: 4px; border-left: 1px solid #aca899; box-shadow: inset 1px 0 #fff; }
    .f1 { width: 109px; } .f2 { width: 101px; } .f3 { width: 72px; } .f4 { width: 71px; } .f5 { width: 69px; } .f6 { width: 71px; } .f7 { width: 66px; }
    .net { width: 162px; display: flex; align-items: center; gap: 28px; height: 21px; }
    .net .signal { width: 24px; height: 13px; }
    .size { width: 16px; height: 16px; margin-left: auto; align-self: flex-end; }
  `;

  @state() private period = "H4";
  @state() private tab = "EURUSD,H4";
  @state() private pressed = new Set(["cursor", "candles", "autoScroll", "shift"]);

  private toggle(name: string) {
    const next = new Set(this.pressed);
    next.has(name) ? next.delete(name) : next.add(name);
    this.pressed = next;
  }
  private tool(name: string, label: string) {
    const on = this.pressed.has(name);
    return html`<button class=${classMap({ tool: true, pressed: on })} aria-label=${label} aria-pressed=${on} @click=${() => this.toggle(name)}>
      <span><tool-icon name=${name}></tool-icon></span></button>`;
  }
  private drop(name: string, label: string) {
    return html`<button class="drop" aria-label=${label}><tool-icon name=${name}></tool-icon></button>`;
  }

  render() {
    const sep = html`<div class="sep"></div>`;
    return html`<div class="window">
      <header class="titlebar">
        <svg class="logo" viewBox="0 0 16 16"><rect width="16" height="16" fill="#fff"></rect>
          <path d="M1 8l4-3 4 4 6-5" stroke="#e0c020" stroke-width="3" fill="none"></path>
          <path d="M1 10l4-3 3 3 3-4 4-1" stroke="#222" stroke-width="2" fill="none"></path></svg>
        <h1 class="caption">11116296: NoorCM - Demo Account - [EURUSD,H4]</h1>
        <div class="controls">
          <button class="control" aria-label="Minimize"><svg viewBox="0 0 19 19"><path d="M4 13.500h7" stroke="#fff" stroke-width="3"></path></svg></button>
          <button class="control" aria-label="Maximize"><svg viewBox="0 0 19 19"><path d="M4.500 4.500h10v9h-10zM4 5.500h11" stroke="#fff" fill="none"></path></svg></button>
          <button class="control close" aria-label="Close"><svg viewBox="0 0 19 19"><path d="M4.500 4.500l10 10M14.500 4.500l-10 10" stroke="#fff" stroke-width="2"></path></svg></button>
        </div>
      </header>
      <div class="body">
        <nav class="menubar">
          <svg class="doc" viewBox="0 0 16 16"><rect x=".5" y="1.500" width="11" height="9" fill="#fff" stroke="#5a90e0"></rect>
            <path d="M2 4.500h8M3.500 3v6" stroke="#5a90e0"></path><rect x="4.500" y="5.500" width="11" height="9" fill="#fff" stroke="#5a90e0"></rect>
            <path d="M6 12l2-4 2 4 2-4 2 4" stroke="#3a78d0" fill="none"></path></svg>
          ${MENU.map((m) => html`<button class="menu">${m}</button>`)}
          <div class="spacer"></div>
          <button class="mini" aria-label="Minimize chart"><svg viewBox="0 0 14 14"><path d="M4 10h6" stroke="#666" stroke-width="2"></path></svg></button>
          <button class="mini" aria-label="Restore chart"><svg viewBox="0 0 14 14"><path d="M5.500 5V3.500h6v5H10M5 3.500h7M3.500 6.500h6v4h-6zM3 6h7" stroke="#666" fill="none"></path></svg></button>
          <button class="mini" aria-label="Close chart"><svg viewBox="0 0 14 14"><path d="M4 4l6 6M10 4l-6 6" stroke="#666" stroke-width="2"></path></svg></button>
        </nav>
        <div class="bar">
          <div class="strip"><div class="grip"></div>
            ${this.drop("newChart", "New chart")}${this.drop("profiles", "Profiles")}${sep}
            ${this.tool("market", "Market watch")}${this.tool("target", "Data window")}${this.tool("favorites", "Navigator")}
            ${this.tool("dataWindow", "Terminal")}${this.tool("tester", "Strategy tester")}${sep}
            <button class="labelled"><tool-icon name="order"></tool-icon>New Order</button>
            ${this.tool("editor", "MetaEditor")}
            <button class="labelled"><tool-icon name="experts"></tool-icon>Expert Advisors</button>
          </div>
          <div class="strip end"><div class="grip"></div>
            ${this.tool("bars", "Bar chart")}${this.tool("candles", "Candlesticks")}${this.tool("line", "Line chart")}${sep}
            ${this.tool("zoomIn", "Zoom in")}${this.tool("zoomOut", "Zoom out")}${sep}
            ${this.tool("autoScroll", "Auto scroll")}${this.tool("shift", "Chart shift")}${sep}
            ${this.drop("indicators", "Indicators")}${this.drop("periods", "Periods")}${this.drop("templates", "Templates")}
          </div>
        </div>
        <div class="bar second">
          <div class="strip"><div class="grip"></div>
            ${this.tool("cursor", "Cursor")}${this.tool("cross", "Crosshair")}${sep}
            ${this.tool("vline", "Vertical line")}${this.tool("hline", "Horizontal line")}${this.tool("trend", "Trendline")}
            ${this.tool("channel", "Equidistant channel")}${this.tool("fibo", "Fibonacci retracement")}
            <button class="tool letter" aria-label="Text">A</button>${this.tool("label", "Text label")}
            ${this.drop("arrows", "Arrows")}
          </div>
          <div class="strip"><div class="grip"></div>
            ${PERIODS.map((p) => html`<button class=${classMap({ period: true, pressed: p === this.period })} @click=${() => (this.period = p)}>${p}</button>`)}
          </div>
        </div>
        <main class="mdi"><price-chart></price-chart></main>
        <nav class="tabs">
          ${TABS.map((t) => html`<button class=${classMap({ tab: true, active: t === this.tab })} @click=${() => (this.tab = t)}>${t}</button>`)}
          <div class="spacer"></div>
          <div class="arrows"><button aria-label="Previous charts"></button><button aria-label="Next charts"></button></div>
        </nav>
        <footer class="status">
          <div class="main">For Help, press F1</div>
          <div class="field f1">Default</div>
          ${["f2", "f3", "f4", "f5", "f6", "f7"].map((f) => html`<div class="field ${f}"></div>`)}
          <div class="field net">
            <svg class="signal" viewBox="0 0 24 13">${[0, 1, 2, 3, 4, 5, 6, 7].map((i) => svg`
              <rect x=${i * 3} y="0" width="2" height=${10 - i} fill="#5f7a10"></rect>
              <rect x=${i * 3} y=${11 - i} width="2" height=${2 + i} fill="#0f4060"></rect>`)}</svg>
            <span>365/6 kb</span>
            <svg class="size" viewBox="0 0 16 16"><path d="M2 16L16 2M6 16L16 6M10 16l6-6M14 16l2-2" stroke="#aca899" stroke-width="2"></path></svg>
          </div>
        </footer>
      </div>
    </div>`;
  }
}
